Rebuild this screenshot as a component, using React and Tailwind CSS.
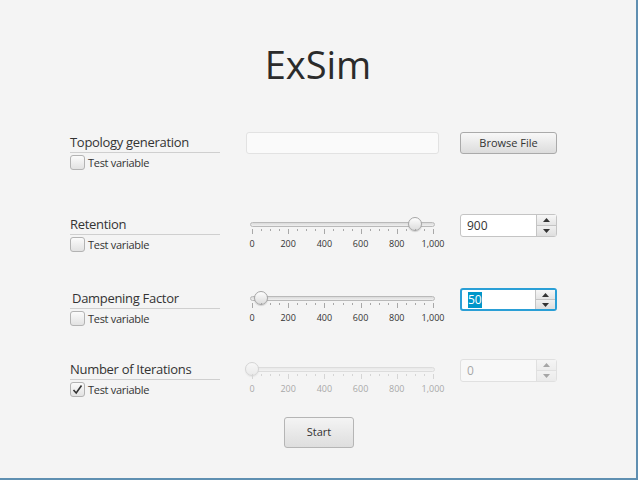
import React from 'react'

const ticks = Array.from({ length: 21 }, (_, i) => i)
const labels = ['0', '200', '400', '600', '800', '1,000']

function CheckBox({ checked }) {
  return (
    <div className="flex items-center mt-[2px]">
      <div className="w-[15px] h-[15px] rounded-[3px] border border-[#b3b3b3] bg-gradient-to-b from-[#fbfbfb] to-[#e2e2e2] flex items-center justify-center">
        {checked && (
          <svg width="11" height="11" viewBox="0 0 11 11">
            <path d="M1.5 6 L4.2 9 L9.5 1.5" fill="none" stroke="#333" strokeWidth="1.6" />
          </svg>
        )}
      </div>
      <span className="ml-[3px] text-[11px] tracking-[-0.3px] leading-[14px] text-[#333]">Test variable</span>
    </div>
  )
}

function Slider({ value, disabled }) {
  const pos = 2 + (value / 1000) * 181
  return (
    <div className={'relative w-[193px] pt-[8px] pl-[4px] ' + (disabled ? 'opacity-40' : '')}>
      <div className="w-[185px] h-[5px] rounded-full border border-[#b9b9b9] bg-gradient-to-b from-[#d9d9d9] to-[#f0f0f0]" />
      <div
        className="absolute top-[3px] w-[14px] h-[14px] rounded-full border border-[#a6a6a6] bg-gradient-to-b from-[#fdfdfd] to-[#dcdcdc] shadow-[0_1px_1px_rgba(0,0,0,0.15)]"
        style={{ left: pos + 4 - 7 }}
      />
      <div className="relative h-[6px] mt-[2px]">
        {ticks.map((i) => (
          <div
            key={i}
            className={'absolute top-0 w-px bg-[#a8a8a8] ' + (i % 4 === 0 || i === 20 ? 'h-[5px]' : 'h-[2px]')}
            style={{ left: 2 + (i * 181) / 20 }}
          />
        ))}
      </div>
      <div className="relative h-[14px] mt-[2px]">
        {labels.map((l, i) => (
          <span
            key={l}
            className="absolute top-0 -translate-x-1/2 text-[9px] leading-[14px] text-[#333] whitespace-nowrap"
            style={{ left: 2 + (i * 181) / 5 }}
          >
            {l}
          </span>
        ))}
      </div>
    </div>
  )
}

function Spinner({ value, focused, disabled }) {
  return (
    <div
      className={
        'flex w-[97px] h-[23px] rounded-[3px] bg-white ' +
        (focused ? 'border-2 border-[#2a9fd6]' : 'border border-[#c4c4c4]') +
        (disabled ? ' opacity-40' : '')
      }
    >
      <div className="flex-1 flex items-center pl-[6px] text-[12px] text-[#333]">
        {focused ? <span className="bg-[#0096c9] text-white leading-[16px]">{value}</span> : value}
      </div>
      <div className="w-[20px] flex flex-col border-l border-[#c4c4c4]">
        <div className="flex-1 flex items-center justify-center bg-gradient-to-b from-[#f7f7f7] to-[#e4e4e4] border-b border-[#c4c4c4]">
          <svg width="7" height="4" viewBox="0 0 7 4"><path d="M0 4 L3.5 0 L7 4Z" fill="#333" /></svg>
        </div>
        <div className="flex-1 flex items-center justify-center bg-gradient-to-b from-[#f0f0f0] to-[#dedede]">
          <svg width="7" height="4" viewBox="0 0 7 4"><path d="M0 0 L3.5 4 L7 0Z" fill="#333" /></svg>
        </div>
      </div>
    </div>
  )
}

function Row({ label, indent, top, checked, children, right }) {
  return (
    <div className="flex items-start pl-[70px]" style={{ marginTop: top }}>
      <div className="w-[150px] pt-[1px]">
        <div
          className="border-b border-[#cfcfcf] pb-[1px] text-[13px] tracking-[-0.3px] leading-[18px] text-[#333]"
          style={{ paddingLeft: indent }}
        >
          {label}
        </div>
        <CheckBox checked={checked} />
      </div>
      <div className="ml-[26px] flex">{children}</div>
      <div className="ml-[21px] flex">{right}</div>
    </div>
  )
}

export default function App() {
  return (
    <div className="w-[638px] h-[480px] bg-[#5f8fb1]">
      <div className="w-[636px] h-[478px] bg-[#f4f4f4] font-['Open_Sans',sans-serif] overflow-hidden">
        <h1 className="pt-[38px] text-center text-[38px] leading-[52px] text-[#2b2b2b]">ExSim</h1>

        <Row label="Topology generation" top={42} right={
          <button className="block w-[97px] h-[22px] rounded-[3px] border border-[#aaaaaa] bg-gradient-to-b from-[#f8f8f8] to-[#dcdcdc] text-[11px] text-[#333]">
            Browse File
          </button>
        }>
          <div className="w-[193px] h-[22px] rounded-[3px] border border-[#e2e2e2] bg-[#fafafa]" />
        </Row>

        <Row label="Retention" top={44} right={<Spinner value="900" />}>
          <Slider value={900} />
        </Row>

        <Row label="Dampening Factor" indent={2} top={36} right={<Spinner value="50" focused />}>
          <Slider value={50} />
        </Row>

        <Row label="Number of Iterations" top={33} checked right={<Spinner value="0" disabled />}>
          <Slider value={0} disabled />
        </Row>

        <div className="flex justify-center pl-[2px] mt-[20px]">
          <button className="w-[70px] h-[31px] rounded-[3px] border border-[#b5b5b5] bg-gradient-to-b from-[#f4f4f4] to-[#dedede] text-[11px] text-[#333]">
            Start
          </button>
        </div>
      </div>
    </div>
  )
}
